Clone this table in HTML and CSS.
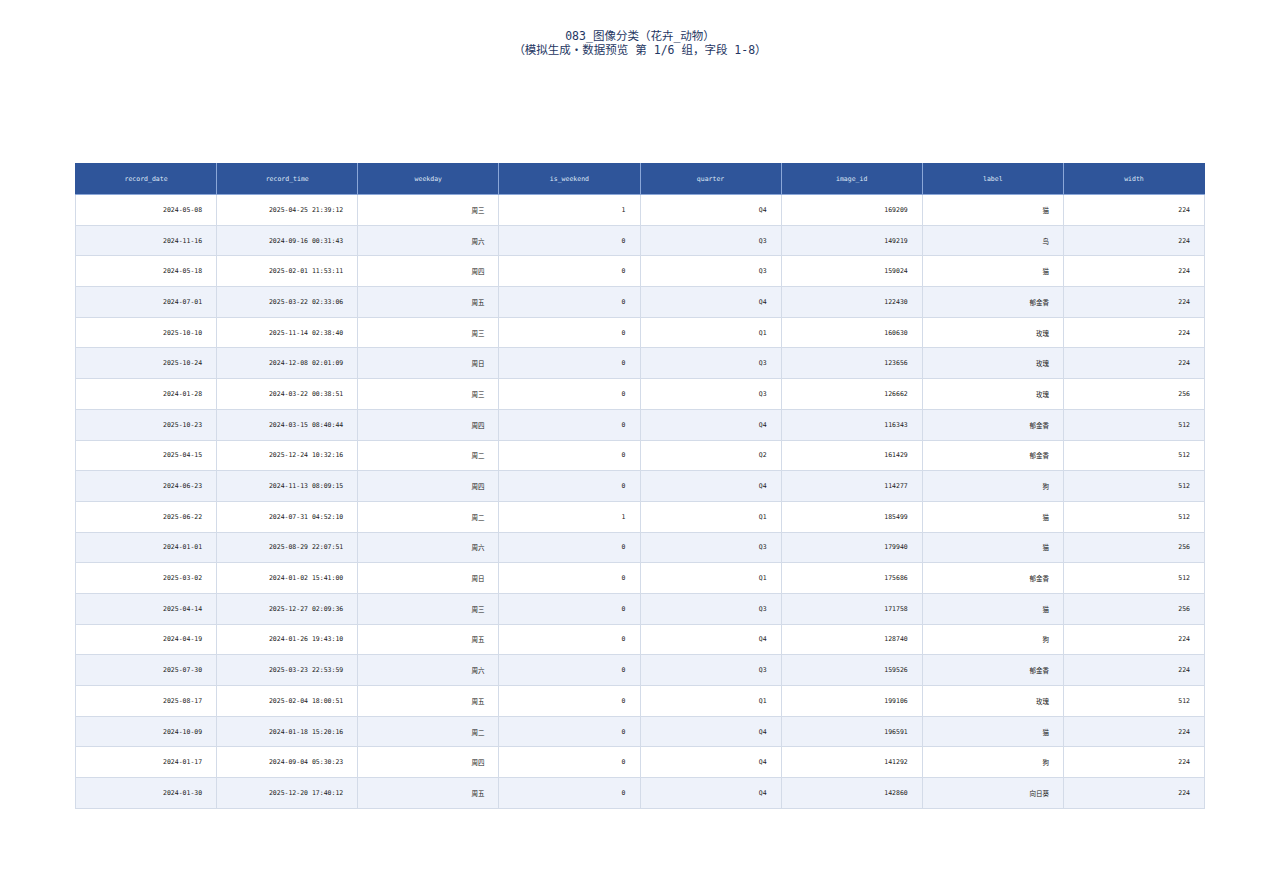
FILE: index.html
```html
<!DOCTYPE html>
<html lang="zh-CN">
<head>
    <meta charset="UTF-8">
    <meta name="viewport" content="width=device-width, initial-scale=1.0">
    <title>083_图像分类（花卉_动物）</title>
    <link rel="stylesheet" href="styles.css">
</head>
<body>
    <!-- Title -->
    <div class="title">
        <div>083_图像分类（花卉_动物）</div>
        <div>（模拟生成・数据预览 第 1/6 组，字段 1-8）</div>
    </div>

    <!-- Data Table -->
    <table class="data-table">
        <thead>
            <tr>
                <th>record_date</th>
                <th>record_time</th>
                <th>weekday</th>
                <th>is_weekend</th>
                <th>quarter</th>
                <th>image_id</th>
                <th>label</th>
                <th>width</th>
            </tr>
        </thead>
        <tbody>
            <tr><td>2024-05-08</td><td>2025-04-25 21:39:12</td><td>周三</td><td>1</td><td>Q4</td><td>169209</td><td>猫</td><td>224</td></tr>
            <tr><td>2024-11-16</td><td>2024-09-16 00:31:43</td><td>周六</td><td>0</td><td>Q3</td><td>149219</td><td>鸟</td><td>224</td></tr>
            <tr><td>2024-05-18</td><td>2025-02-01 11:53:11</td><td>周四</td><td>0</td><td>Q3</td><td>159024</td><td>猫</td><td>224</td></tr>
            <tr><td>2024-07-01</td><td>2025-03-22 02:33:06</td><td>周五</td><td>0</td><td>Q4</td><td>122430</td><td>郁金香</td><td>224</td></tr>
            <tr><td>2025-10-10</td><td>2025-11-14 02:38:40</td><td>周三</td><td>0</td><td>Q1</td><td>160630</td><td>玫瑰</td><td>224</td></tr>
            <tr><td>2025-10-24</td><td>2024-12-08 02:01:09</td><td>周日</td><td>0</td><td>Q3</td><td>123656</td><td>玫瑰</td><td>224</td></tr>
            <tr><td>2024-01-28</td><td>2024-03-22 00:38:51</td><td>周三</td><td>0</td><td>Q3</td><td>126662</td><td>玫瑰</td><td>256</td></tr>
            <tr><td>2025-10-23</td><td>2024-03-15 08:40:44</td><td>周四</td><td>0</td><td>Q4</td><td>116343</td><td>郁金香</td><td>512</td></tr>
            <tr><td>2025-04-15</td><td>2025-12-24 10:32:16</td><td>周二</td><td>0</td><td>Q2</td><td>161429</td><td>郁金香</td><td>512</td></tr>
            <tr><td>2024-06-23</td><td>2024-11-13 08:09:15</td><td>周四</td><td>0</td><td>Q4</td><td>114277</td><td>狗</td><td>512</td></tr>
            <tr><td>2025-06-22</td><td>2024-07-31 04:52:10</td><td>周二</td><td>1</td><td>Q1</td><td>185499</td><td>猫</td><td>512</td></tr>
            <tr><td>2024-01-01</td><td>2025-08-29 22:07:51</td><td>周六</td><td>0</td><td>Q3</td><td>179940</td><td>猫</td><td>256</td></tr>
            <tr><td>2025-03-02</td><td>2024-01-02 15:41:00</td><td>周日</td><td>0</td><td>Q1</td><td>175686</td><td>郁金香</td><td>512</td></tr>
            <tr><td>2025-04-14</td><td>2025-12-27 02:09:36</td><td>周三</td><td>0</td><td>Q3</td><td>171758</td><td>猫</td><td>256</td></tr>
            <tr><td>2024-04-19</td><td>2024-01-26 19:43:10</td><td>周五</td><td>0</td><td>Q4</td><td>128740</td><td>狗</td><td>224</td></tr>
            <tr><td>2025-07-30</td><td>2025-03-23 22:53:59</td><td>周六</td><td>0</td><td>Q3</td><td>159526</td><td>郁金香</td><td>224</td></tr>
            <tr><td>2025-08-17</td><td>2025-02-04 18:00:51</td><td>周五</td><td>0</td><td>Q1</td><td>199106</td><td>玫瑰</td><td>512</td></tr>
            <tr><td>2024-10-09</td><td>2024-01-18 15:20:16</td><td>周二</td><td>0</td><td>Q4</td><td>196591</td><td>猫</td><td>224</td></tr>
            <tr><td>2024-01-17</td><td>2024-09-04 05:30:23</td><td>周四</td><td>0</td><td>Q4</td><td>141292</td><td>狗</td><td>224</td></tr>
            <tr><td>2024-01-30</td><td>2025-12-20 17:40:12</td><td>周五</td><td>0</td><td>Q4</td><td>142860</td><td>向日葵</td><td>224</td></tr>
        </tbody>
    </table>
</body>
</html>
```

FILE: styles.css
```css
body {
    font-family: "DejaVu Sans Mono", "Noto Sans CJK SC", monospace;
    background-color: #fff;
    color: #222;
    margin: 0;
    padding: 29px 75px 0 75px;
}
.title {
    text-align: center;
    font-size: 11.5px;
    line-height: 14px;
    color: #1f3763;
    margin-bottom: 106px;
}
.data-table {
    width: 1130px;
    border-collapse: collapse;
    table-layout: fixed;
    font-size: 6.5px;
}
.data-table th {
    background-color: #2f559a;
    color: #dfe7f5;
    font-weight: normal;
    height: 30px;
    padding: 0;
    text-align: center;
    border: 1px solid #8ba7d8;
    border-top-color: #2f559a;
}
.data-table th:first-child {
    border-left-color: #2f559a;
}
.data-table th:last-child {
    border-right-color: #2f559a;
}
.data-table td {
    height: 29.7px;
    padding: 0 14px 0 0;
    text-align: right;
    border: 1px solid #d3dbe8;
}
.data-table tbody tr:nth-child(even) td {
    background-color: #eef2fa;
}
```
